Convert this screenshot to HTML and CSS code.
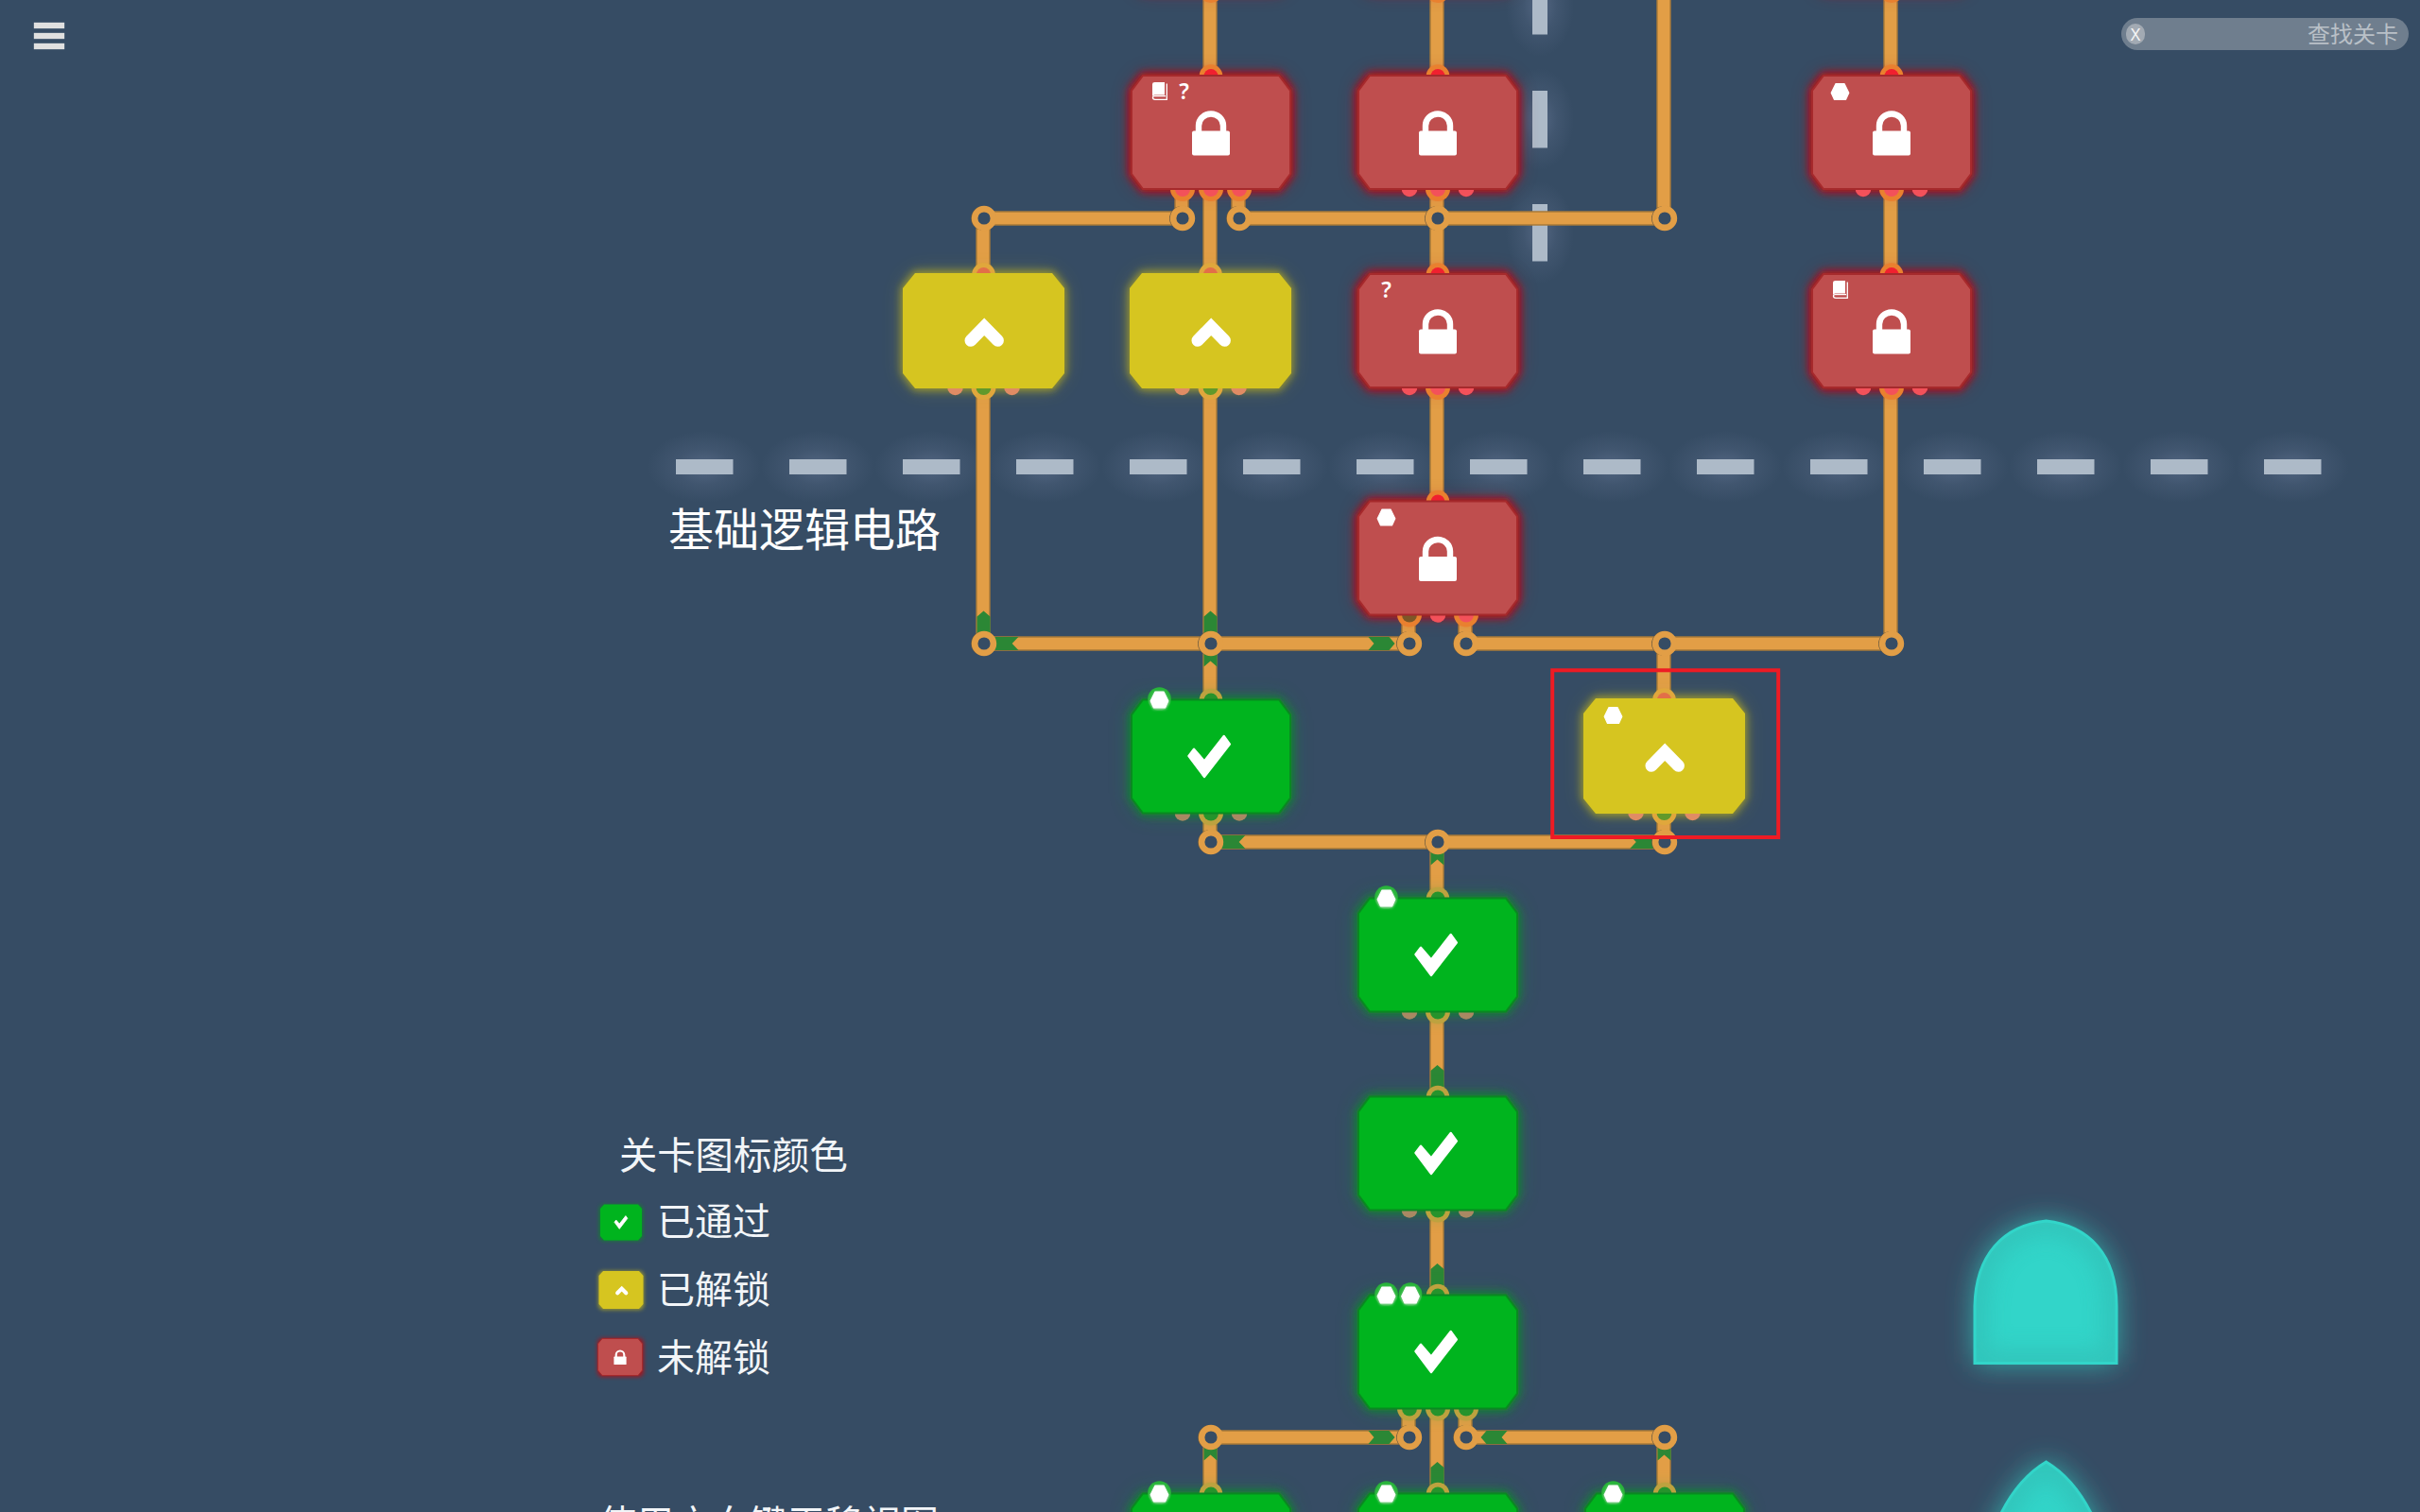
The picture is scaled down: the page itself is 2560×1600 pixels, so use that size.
FILE: index.html
```html
<!DOCTYPE html>
<html lang="zh-CN">
<head>
<meta charset="utf-8">
<title>关卡地图</title>
<link rel="stylesheet" href="styles.css">
</head>
<body>
<main class="map">
<svg class="board" viewBox="0 0 2560 1600" aria-hidden="true">
  <defs>
    <filter id="soft" x="-40%" y="-40%" width="180%" height="180%"><feGaussianBlur stdDeviation="4"/></filter>
    <filter id="wide" x="-60%" y="-60%" width="220%" height="220%"><feGaussianBlur stdDeviation="11"/></filter>
    <filter id="tealglow" x="-60%" y="-60%" width="220%" height="220%"><feGaussianBlur stdDeviation="15"/></filter>
    <filter id="inner" x="-30%" y="-30%" width="160%" height="160%"><feGaussianBlur stdDeviation="11"/></filter>
    <filter id="tiny" x="-30%" y="-30%" width="160%" height="160%"><feGaussianBlur stdDeviation="1.500"/></filter>
    <radialGradient id="dashglow"><stop offset="0" stop-color="#7080a0" stop-opacity=".5"/><stop offset=".5" stop-color="#7080a0" stop-opacity=".18"/><stop offset="1" stop-color="#7080a0" stop-opacity="0"/></radialGradient>
    <path id="tile" d="M-72-60H72L84-44V44L72 60H-72L-84 44V-44Z"/>
    <path id="tile-wide" d="M-72.500-61H72.500L85.500-45V45L72.500 61H-72.500L-85.500 45V-45Z"/>
    <g id="lock"><rect x="-20" y="-1.500" width="40" height="26" rx="2"/><path d="M-13 1V-7A13 12.500 0 0 1 13-7V1" fill="none" stroke="#fff" stroke-width="6.400"/></g>
    <path id="chevron" d="M-13.500 10.300 .7-4.300 14.900 10.300" fill="none" stroke="#fff" stroke-width="13" stroke-linecap="round"/>
    <path id="check" d="M-7 21.500-23.500-.5-18-7.700-7 5 13.700-21.500 19.800-13Z" stroke="#fff" stroke-width="2.400" stroke-linejoin="round"/>
    <path id="hex" d="M-4.500-8.500H4.500L9.300 1.200 6 8.500H-6L-9.300 1.200Z" stroke="#fff" stroke-width="1.200" stroke-linejoin="round"/>
    <g id="book"><path d="M-5.500-9.500H5V4H-5.500Q-7.500 4-8 5.500V-7.500Q-8-9.500-5.500-9.500Z"/><path d="M7.300-8V8.800H-5Q-7.500 8.800-7.500 6.800T-5 5.200H6" fill="none" stroke="#fff" stroke-width="1.300"/></g>
    <g id="joint"><circle cx="-1" r="12.900" fill="#6b5a40"/><circle r="9.900" fill="#364c64" stroke="#e29e46" stroke-width="6.600"/></g>
    <path id="arrow" d="M0 0 7 6V28L0 22-7 28V6Z" fill="#2b8735"/>
    <g id="glow"><use href="#tile" class="halo" filter="url(#wide)"/><use href="#tile" class="edge" filter="url(#soft)"/></g>
    <g id="top-pin"><circle cy="-59.500" r="12.300" class="ring"/><circle cy="-59.500" r="7.500" class="in"/></g>
    <g id="out-pin"><circle cy="60" r="13" class="ring"/><circle cy="60" r="8" class="out"/></g>
    <circle id="free-pin" cy="60" r="8.300" class="free"/>
    <g id="side-pins"><use href="#free-pin" x="-30"/><use href="#free-pin" x="30"/></g>
    <g id="red-body"><use href="#tile" fill="#bf4e4e" stroke="#a62a2c" stroke-width="2"/><use href="#lock" fill="#fff"/></g>
    <g id="yellow-body"><use href="#tile-wide" fill="#d6c520"/><use href="#chevron"/></g>
    <g id="green-body"><use href="#tile" fill="#00b41e" stroke="#098921" stroke-width="2"/><use href="#check" fill="#fff"/></g>
    <g id="medal"><circle cy="-1" r="12.300" fill="#28b43a"/><use href="#hex" y="1" fill="#fff" filter="url(#tiny)" opacity=".6"/><use href="#hex" fill="#fff"/></g>
    <path id="wires" d="M1280 0V80M1280 200V290M1280 410V740M1280 860V891M1520 0V80M1520 200V290M1520 410V530M1760 0V231M2000 0V80M2000 200V290M2000 410V681M1040 231V290M1040 410V681M1250 200V231M1310 200V231M1490 650V681M1550 650V681M1760 681V740M1760 860V891M1520 891V950M1520 1070V1160M1520 1280V1370M1520 1490V1580M1490 1490V1521M1550 1490V1521M1280 1521V1580M1760 1521V1580M1041 231H1251M1311 231H1761M1041 681H1491M1551 681H2001M1281 891H1761M1281 1521H1491M1551 1521H1761"/>
  </defs>

  <!-- region borders -->
  <g fill="url(#dashglow)">
    <ellipse cx="745" cy="494" rx="60" ry="38"/><ellipse cx="865" cy="494" rx="60" ry="38"/><ellipse cx="985" cy="494" rx="60" ry="38"/><ellipse cx="1105" cy="494" rx="60" ry="38"/><ellipse cx="1225" cy="494" rx="60" ry="38"/><ellipse cx="1345" cy="494" rx="60" ry="38"/><ellipse cx="1465" cy="494" rx="60" ry="38"/><ellipse cx="1585" cy="494" rx="60" ry="38"/><ellipse cx="1705" cy="494" rx="60" ry="38"/><ellipse cx="1825" cy="494" rx="60" ry="38"/><ellipse cx="1945" cy="494" rx="60" ry="38"/><ellipse cx="2065" cy="494" rx="60" ry="38"/><ellipse cx="2185" cy="494" rx="60" ry="38"/><ellipse cx="2305" cy="494" rx="60" ry="38"/><ellipse cx="2425" cy="494" rx="60" ry="38"/>
    <ellipse cx="1629" cy="6" rx="36" ry="54"/><ellipse cx="1629" cy="126" rx="36" ry="54"/><ellipse cx="1629" cy="246" rx="36" ry="54"/>
  </g>
  <g stroke="#adbac8" stroke-width="16" stroke-dasharray="60.500 59.500">
    <path d="M715 494H2456"/><path d="M1629-24V277"/>
  </g>

  <!-- wires: dark outline below, copper fill above -->
  <use href="#wires" class="wire-edge"/>
  <use href="#wires" class="wire-fill"/>

  <!-- signal arrows travelling along the wires -->
  <g>
    <use href="#arrow" x="1040.500" y="646.500"/><use href="#arrow" x="1280.500" y="646.500"/><use href="#arrow" x="1280.500" y="677.500"/>
    <use href="#arrow" x="1520.500" y="887.500"/><use href="#arrow" x="1520.500" y="1127"/><use href="#arrow" x="1520.500" y="1337"/><use href="#arrow" x="1520.500" y="1547"/>
    <use href="#arrow" x="1280.500" y="1517.500"/><use href="#arrow" x="1760.500" y="1517.500"/>
    <use href="#arrow" transform="translate(1475.500 681) rotate(90)"/><use href="#arrow" transform="translate(1046 681) rotate(-90) scale(1 1.120)"/>
    <use href="#arrow" transform="translate(1286 891) rotate(-90) scale(1 1.120)"/><use href="#arrow" transform="translate(1755 891) rotate(90) scale(1 1.100)"/>
    <use href="#arrow" transform="translate(1475.500 1521) rotate(90)"/><use href="#arrow" transform="translate(1566.500 1521) rotate(-90)"/>
  </g>

  <g>
    <use href="#joint" x="1041" y="231"/><use href="#joint" x="1251" y="231"/><use href="#joint" x="1311" y="231"/><use href="#joint" x="1521" y="231"/><use href="#joint" x="1761" y="231"/>
    <use href="#joint" x="1041" y="681"/><use href="#joint" x="1281" y="681"/><use href="#joint" x="1491" y="681"/><use href="#joint" x="1551" y="681"/><use href="#joint" x="1761" y="681"/><use href="#joint" x="2001" y="681"/>
    <use href="#joint" x="1281" y="891"/><use href="#joint" x="1521" y="891"/><use href="#joint" x="1761" y="891"/>
    <use href="#joint" x="1281" y="1521"/><use href="#joint" x="1491" y="1521"/><use href="#joint" x="1551" y="1521"/><use href="#joint" x="1761" y="1521"/>
  </g>

  <!-- locked levels -->
  <g class="red">
    <g transform="translate(1281 -70)"><use href="#glow"/><use href="#out-pin"/></g>
    <g transform="translate(1521 -70)"><use href="#glow"/><use href="#out-pin"/></g>
    <g transform="translate(2001 -70)"><use href="#glow"/><use href="#out-pin"/></g>
    <g transform="translate(1281 140)"><use href="#glow"/><use href="#top-pin"/><use href="#out-pin" x="-30"/><use href="#out-pin"/><use href="#out-pin" x="30"/><use href="#red-body"/><use href="#book" x="-54" y="-43.500" fill="#fff"/><text x="-28.500" y="-35" class="mark">?</text></g>
    <g transform="translate(1521 140)"><use href="#glow"/><use href="#top-pin"/><use href="#out-pin"/><use href="#side-pins"/><use href="#red-body"/></g>
    <g transform="translate(2001 140)"><use href="#glow"/><use href="#top-pin"/><use href="#out-pin"/><use href="#side-pins"/><use href="#red-body"/><use href="#hex" x="-54.500" y="-43" fill="#fff"/></g>
    <g transform="translate(1521 350)"><use href="#glow"/><use href="#top-pin"/><use href="#out-pin"/><use href="#side-pins"/><use href="#red-body"/><text x="-54.500" y="-35" class="mark">?</text></g>
    <g transform="translate(2001 350)"><use href="#glow"/><use href="#top-pin"/><use href="#out-pin"/><use href="#side-pins"/><use href="#red-body"/><use href="#book" x="-54" y="-43.500" fill="#fff"/></g>
    <g transform="translate(1521 590.500)"><use href="#glow"/><use href="#top-pin"/><use href="#out-pin" x="-30" class="lit"/><use href="#free-pin"/><use href="#out-pin" x="30"/><use href="#red-body"/><use href="#hex" x="-54.500" y="-43" fill="#fff"/></g>
  </g>

  <!-- unlocked levels -->
  <g class="yellow">
    <g transform="translate(1040.500 350)"><use href="#glow"/><use href="#top-pin"/><use href="#out-pin"/><use href="#side-pins"/><use href="#yellow-body"/></g>
    <g transform="translate(1280.500 350)"><use href="#glow"/><use href="#top-pin"/><use href="#out-pin"/><use href="#side-pins"/><use href="#yellow-body"/></g>
    <g transform="translate(1760.500 800)"><use href="#glow"/><use href="#top-pin"/><use href="#out-pin"/><use href="#side-pins"/><use href="#yellow-body"/><use href="#hex" x="-54" y="-43" fill="#fff"/></g>
  </g>

  <!-- completed levels -->
  <g class="green">
    <g transform="translate(1281 800.500)"><use href="#glow"/><use href="#top-pin"/><use href="#out-pin"/><use href="#side-pins"/><use href="#green-body"/><use href="#medal" x="-54.500" y="-60"/></g>
    <g transform="translate(1521 1010.500)"><use href="#glow"/><use href="#top-pin"/><use href="#out-pin"/><use href="#side-pins"/><use href="#green-body"/><use href="#medal" x="-54.500" y="-60"/></g>
    <g transform="translate(1521 1220.500)"><use href="#glow"/><use href="#top-pin"/><use href="#out-pin"/><use href="#side-pins"/><use href="#green-body"/></g>
    <g transform="translate(1521 1430.500)"><use href="#glow"/><use href="#top-pin"/><use href="#out-pin" x="-30"/><use href="#out-pin"/><use href="#out-pin" x="30"/><use href="#green-body"/><use href="#medal" x="-54.500" y="-60"/><use href="#medal" x="-29" y="-60"/></g>
    <g transform="translate(1281 1640.500)"><use href="#glow"/><use href="#top-pin"/><use href="#green-body"/><use href="#medal" x="-54.500" y="-60"/></g>
    <g transform="translate(1521 1640.500)"><use href="#glow"/><use href="#top-pin"/><use href="#green-body"/><use href="#medal" x="-54.500" y="-60"/></g>
    <g transform="translate(1761 1640.500)"><use href="#glow"/><use href="#top-pin"/><use href="#green-body"/><use href="#medal" x="-54.500" y="-60"/></g>
  </g>

  <!-- gate ornaments -->
  <defs>
    <path id="and" d="M2089 1442.500V1382C2090 1328 2119 1297 2164.500 1292 2210 1297 2239 1328 2239 1382V1442.500Z"/>
    <path id="or" d="M2164.500 1547C2198 1567 2227 1609 2240 1699H2089C2102 1609 2131 1567 2164.500 1547Z"/>
    <clipPath id="and-clip"><use href="#and"/></clipPath><clipPath id="or-clip"><use href="#or"/></clipPath>
  </defs>
  <g fill="#30c8be">
    <use href="#and" filter="url(#tealglow)" opacity=".8"/><use href="#or" filter="url(#tealglow)" opacity=".8"/>
    <use href="#and" fill="#32d5c9"/><use href="#or" fill="#32d5c9"/>
    <g clip-path="url(#and-clip)" opacity=".45"><use href="#and" fill="none" stroke="#32b4ac" stroke-width="30" filter="url(#inner)"/></g>
    <g clip-path="url(#or-clip)" opacity=".45"><use href="#or" fill="none" stroke="#32b4ac" stroke-width="30" filter="url(#inner)"/></g>
    <g fill="none" stroke="#32d5c9" stroke-width="3"><use href="#and"/><use href="#or"/></g>
  </g>

  <rect x="1642.200" y="709.300" width="239" height="176.700" fill="none" stroke="#ee1b24" stroke-width="4"/>
</svg>
<h1 class="region-name">基础逻辑电路</h1>
<section class="legend">
  <h2 class="legend-title">关卡图标颜色</h2>
  <ul class="legend-list">
    <li class="legend-item"><svg class="chip green" viewBox="-24 -20 48 40"><rect class="chip-glow" x="-22" y="-18" width="46" height="38" rx="5"/><path d="M-17-18.500H19L23-14V15L19 19.500H-17L-21 15V-14Z" fill="#00b41e"/><use href="#check" transform="translate(1.500 .5) scale(.32)" fill="#fff"/></svg><span class="label">已通过</span></li>
    <li class="legend-item"><svg class="chip yellow" viewBox="-24 -20 48 40"><rect class="chip-glow" x="-23" y="-20" width="48" height="41" rx="5"/><path d="M-18-20H20L24.500-15V15L20 20H-18L-22.500 15V-15Z" fill="#d6c520"/><use href="#chevron" transform="translate(1.500 0) scale(.32)"/></svg><span class="label">已解锁</span></li>
    <li class="legend-item"><svg class="chip red" viewBox="-24 -20 48 40"><rect class="chip-glow" x="-24" y="-20" width="49" height="41" rx="5"/><path d="M-19-19.500H19L23.500-14V14L19 19.500H-19L-23.500 14V-14Z" fill="#bf4e4e" stroke="#a62a2c"/><use href="#lock" transform="scale(.33)" fill="#fff"/></svg><span class="label">未解锁</span></li>
  </ul>
  <p class="hint">使用方向键平移视图</p>
</section>
</main>
<header class="toolbar">
  <button class="menu" aria-label="菜单"><span class="bar"></span><span class="bar"></span><span class="bar"></span></button>
  <div class="search"><span class="clear">X</span><span class="placeholder">查找关卡</span></div>
</header>
</body>
</html>
```
FILE: styles.css
```css
* { box-sizing: border-box; }
body {
  margin: 0;
  width: 2560px;
  height: 1600px;
  overflow: hidden;
  position: relative;
  background: #364c64;
  color: #f2f5f8;
  font-family: "Noto Sans CJK SC", "Noto Sans", sans-serif;
}
.map { position: absolute; inset: 0; overflow: hidden; }
.board { display: block; width: 2560px; height: 1600px; }

.toolbar {
  position: relative;
  display: flex;
  justify-content: space-between;
  align-items: flex-start;
  padding: 19px 12px 0 36px;
}
.menu {
  display: flex;
  flex-direction: column;
  gap: 5px;
  width: 32px;
  padding: 0;
  margin-top: 5px;
  border: 0;
  background: none;
}
.bar { height: 6px; background: #e0e0e0; box-shadow: 0 0 1px #e0e0e0; }
.search {
  display: flex;
  align-items: center;
  justify-content: space-between;
  width: 304px;
  height: 34px;
  padding: 0 11px 0 5px;
  border-radius: 17px;
  background: #6f7e8e;
}
.clear {
  width: 20px;
  height: 22px;
  border-radius: 10px;
  background: #a2aab3;
  color: #f4f4f4;
  font: 18px/22px "Noto Sans", sans-serif;
  text-align: center;
}
.placeholder { font-size: 24px; line-height: 32px; margin-bottom: 3px; color: #b9c0c7; }

/* level states: every tile part takes its colours from these */
.red {
  --edge: #b50d14; --edge-width: 7px; --edge-alpha: 1;
  --halo: #b01c28; --halo-alpha: .4;
  --ring: #e9802f; --in: #f0202f; --out: #f3515a; --free: #f3515a;
}
.yellow {
  --edge: #b4aa22; --edge-width: 6px; --edge-alpha: .8;
  --halo: #a8a030; --halo-alpha: .4;
  --ring: #e0a73c; --in: #e26f48; --out: #61992b; --free: #e08c64;
}
.green {
  --edge: #0c8a28; --edge-width: 5px; --edge-alpha: .85;
  --halo: #1a9a38; --halo-alpha: .5;
  --ring: #bda23f; --in: #26932c; --out: #26932c; --free: #a98863;
}
.lit { --out: #7c5727; }
.edge { fill: var(--edge); stroke: var(--edge); stroke-width: var(--edge-width); opacity: var(--edge-alpha); }
.halo { fill: var(--halo); opacity: var(--halo-alpha); }
.ring { fill: var(--ring); }
.in { fill: var(--in); }
.out { fill: var(--out); }
.free { fill: var(--free); }

.wire-edge { fill: none; stroke: #a87a38; stroke-width: 15.4px; }
.wire-fill { fill: none; stroke: #e29e46; stroke-width: 12.6px; }
.mark { fill: #fff; font: 600 23px "Noto Sans", sans-serif; text-anchor: middle; }

.region-name {
  position: absolute;
  left: 707px;
  top: 521px;
  margin: 0;
  font-size: 48px;
  line-height: 72px;
  font-weight: 400;
  color: #fff;
}
.legend {
  position: absolute;
  left: 632px;
  top: 1184px;
  font-size: 40px;
}
.legend-title { margin: 0 0 0 23px; font-size: 40.3px; font-weight: 400; line-height: 72px; }
.legend-list { list-style: none; margin: 0; padding: 0; }
.legend-item { display: flex; align-items: center; gap: 15px; height: 71.7px; line-height: 60px; }
.label { margin-bottom: 3px; }
.chip { width: 48px; height: 40px; overflow: visible; margin-top: 2px; }
.chip-glow { fill: var(--edge); filter: blur(2px); opacity: .85; }
.hint { margin: 103px 0 0 1px; line-height: 72px; }
```
